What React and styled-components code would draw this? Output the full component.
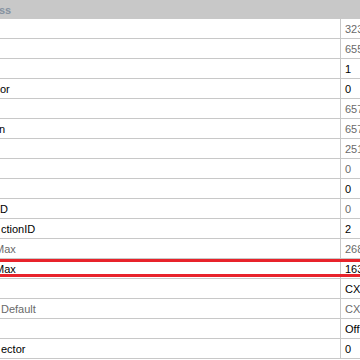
import React from "react";
import styled, { createGlobalStyle } from "styled-components";

const Global = createGlobalStyle`
  html, body { margin: 0; padding: 0; background: #ffffff; overflow: hidden; }
  body { font-family: "Liberation Sans", "DejaVu Sans", sans-serif; }
`;

const Grid = styled.div`
  width: 360px;
  height: 360px;
  display: flex;
  flex-direction: column;
  overflow: hidden;
  font-size: 11px;
`;

const Header = styled.div`
  height: 19px;
  flex: none;
  background: #c8c8c8;
  display: flex;
  align-items: center;
  overflow: hidden;
  white-space: nowrap;
`;

const HeaderText = styled.span`
  font-weight: bold;
  color: #8592a0;
  margin-left: ${(p) => p.$shift}px;
`;

const Row = styled.div`
  position: relative;
  flex: none;
  height: 19px;
  display: grid;
  grid-template-columns: 340px 1fr;
  border-bottom: 1px solid #c8c8c8;
  ${(p) =>
    p.$marked &&
    `
    &::after {
      content: "";
      position: absolute;
      left: -10px;
      right: -10px;
      top: 0;
      height: 18px;
      box-sizing: border-box;
      border: 3px solid #e8232b;
      pointer-events: none;
    }
  `}
`;

const Name = styled.div`
  overflow: hidden;
  white-space: nowrap;
  display: flex;
  align-items: center;
  color: ${(p) => (p.$dim ? "#6a6a6a" : "#000000")};
`;

const NameText = styled.span`
  margin-left: ${(p) => p.$shift}px;
`;

const Value = styled.div`
  border-left: 1px solid #c8c8c8;
  padding-left: 4px;
  overflow: hidden;
  white-space: nowrap;
  display: flex;
  align-items: center;
  color: ${(p) => (p.$dim ? "#6a6a6a" : "#000000")};
`;

const rows = [
  { name: "", value: "32387", dimV: true },
  { name: "", value: "65535", dimV: true },
  { name: "", value: "1" },
  { name: "or", value: "0", shift: 0 },
  { name: "", value: "65793", dimV: true },
  { name: "n", value: "65793", dimV: true, shift: -1 },
  { name: "", value: "2513", dimV: true },
  { name: "", value: "0", dimV: true },
  { name: "", value: "0" },
  { name: "D", value: "0", dimV: true, shift: 0 },
  { name: "ctionID", value: "2", shift: 1 },
  { name: "Max", value: "26843", dimN: true, dimV: true, shift: -5 },
  { name: "Max", value: "16384", shift: -5, marked: true },
  { name: "", value: "CXGrid" },
  { name: "Default", value: "CXDefault", dimN: true, dimV: true, shift: 1 },
  { name: "", value: "Off" },
  { name: "ector", value: "0", shift: 1 },
];

export default function App() {
  return (
    <>
      <Global />
      <Grid>
        <Header>
          <HeaderText $shift={-1}>ss</HeaderText>
        </Header>
        {rows.map((r, i) => (
          <Row key={i} $marked={r.marked}>
            <Name $dim={r.dimN}>
              <NameText $shift={r.shift || 0}>{r.name}</NameText>
            </Name>
            <Value $dim={r.dimV}>{r.value}</Value>
          </Row>
        ))}
      </Grid>
    </>
  );
}
